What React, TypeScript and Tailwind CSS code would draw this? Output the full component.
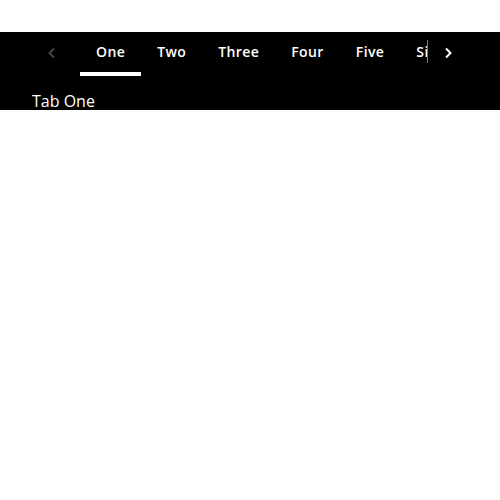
import React, { useState } from 'react';

const tabs = ['One', 'Two', 'Three', 'Four', 'Five', 'Six', 'Seven', 'Eight'];

function Chevron({ dir, color }: { dir: 'left' | 'right'; color: string }) {
  return (
    <svg width="10" height="12" viewBox="0 0 10 12">
      <path
        d={dir === 'left' ? 'M7 1.5 L2.5 6 L7 10.5' : 'M3 1.5 L7.5 6 L3 10.5'}
        fill="none"
        stroke={color}
        strokeWidth="2"
      />
    </svg>
  );
}

export default function App() {
  const [active, setActive] = useState(0);

  return (
    <div className="mt-8 bg-black text-white" style={{ fontFamily: '"Open Sans", sans-serif' }}>
      {/* tab bar */}
      <div className="flex h-11 px-8">
        <button className="flex w-10 items-center justify-center pb-[3px]">
          <Chevron dir="left" color="#444" />
        </button>
        <div className="flex flex-1 overflow-hidden pl-2">
          {tabs.map((t, i) => (
            <button
              key={t}
              onClick={() => setActive(i)}
              className={
                'flex shrink-0 h-11 items-start px-4 pt-[10px] text-[14px] leading-5 font-semibold tracking-[0.4px] border-b-4 ' +
                (i === active ? 'border-white' : 'border-transparent')
              }
            >
              {t}
            </button>
          ))}
        </div>
        <div className="w-px h-[23px] mt-2 bg-[#777]" />
        <button className="flex w-10 items-center justify-center pb-[3px]">
          <Chevron dir="right" color="#fff" />
        </button>
      </div>

      {/* panel */}
      <div className="h-[34px] px-8 pt-[13px] text-[16px] leading-6">Tab {tabs[active]}</div>
    </div>
  );
}
